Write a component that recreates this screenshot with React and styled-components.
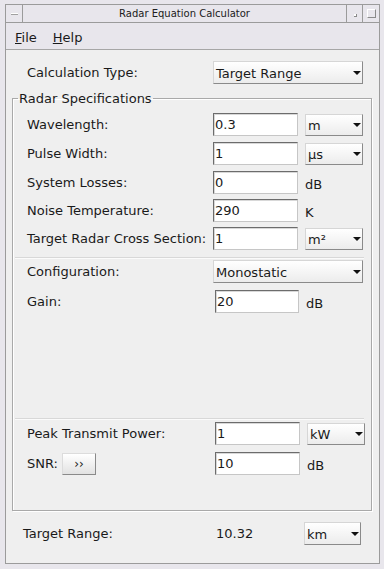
import React from 'react';
import styled, { createGlobalStyle } from 'styled-components';

const Global = createGlobalStyle`
  html, body {
    margin: 0;
    padding: 0;
    background: #e8e6ec;
  }
  * {
    box-sizing: border-box;
  }
`;

const Window = styled.div`
  width: 384px;
  height: 569px;
  padding: 4px 4px 5px 5px;
  background: #e8e6ec;
  font-family: 'DejaVu Sans', 'Liberation Sans', sans-serif;
  font-size: 13px;
  color: #1a1a1a;
`;

const Frame = styled.div`
  height: 100%;
  border: 1px solid #9b9b9b;
  display: flex;
  flex-direction: column;
`;

const TitleBar = styled.div`
  height: 18px;
  display: flex;
  border-bottom: 1px solid #9b9b9b;
  background: #e8e6ec;
`;

const TitleButton = styled.div`
  width: ${(p) => p.$w ?? 17}px;
  flex: none;
  display: flex;
  align-items: center;
  justify-content: center;
  border-left: ${(p) => (p.$left ? '1px solid #9b9b9b' : 'none')};
  border-right: ${(p) => (p.$right ? '1px solid #9b9b9b' : 'none')};
`;

const Dash = styled.div`
  width: 7px;
  height: 2px;
  margin-top: 1px;
  border-top: 1px solid #ffffff;
  border-bottom: 1px solid #a0a0a0;
`;

const Dot = styled.div`
  width: 3px;
  height: 3px;
  margin: 3px 0 0 2px;
  border-right: 1px solid #8a8a8a;
  border-bottom: 1px solid #8a8a8a;
  background: #fff;
`;

const Box = styled.div`
  width: 9px;
  height: 9px;
  border: 1px solid;
  border-color: #ffffff #8a8a8a #8a8a8a #ffffff;
`;

const Title = styled.div`
  flex: 1;
  text-align: center;
  font-size: 10px;
  line-height: 17px;
  color: #202020;
`;

const MenuBar = styled.div`
  height: 27px;
  display: flex;
  align-items: center;
  gap: 16px;
  padding: 2px 0 0 9px;
  border-bottom: 1px solid #a6a6a6;
  background: #e8e6ec;
`;

const MenuItem = styled.span`
  &::first-letter {
    text-decoration: underline;
  }
`;

const Content = styled.div`
  flex: 1;
  display: flex;
  flex-direction: column;
  background: #efefef;
`;

const Row = styled.div`
  display: grid;
  grid-template-columns: ${(p) => p.$label}px ${(p) => p.$field}px ${(p) => p.$unit ?? 58}px;
  column-gap: 7px;
  align-items: center;
  height: ${(p) => p.$h ?? 23}px;
  margin-top: ${(p) => p.$top ?? 0}px;
  padding-left: ${(p) => p.$pad ?? 0}px;
`;

const Label = styled.div`
  white-space: nowrap;
  display: flex;
  align-items: center;
  gap: 4px;
`;

const Input = styled.div`
  height: 23px;
  background: #fff;
  border: 1px solid;
  border-color: #6c6c6c #c6c6c6 #c6c6c6 #6c6c6c;
  box-shadow: inset 1px 1px 0 #d8d8d8;
  padding: 2px 0 0 1px;
  line-height: 17px;
`;

const Select = styled.div`
  height: ${(p) => p.$h ?? 23}px;
  display: flex;
  align-items: center;
  justify-content: space-between;
  padding: 2px 1px 0 2px;
  background: linear-gradient(#ffffff, #ececec);
  border: 1px solid;
  border-color: #d6d6d6 #8a8a8a #8a8a8a #d6d6d6;
`;

const Arrow = styled.span`
  width: 0;
  height: 0;
  border-left: 4px solid transparent;
  border-right: 4px solid transparent;
  border-top: 4px solid #111;
  margin-top: -1px;
`;

const Unit = styled.div`
  padding-top: 4px;
`;

const SmallButton = styled.div`
  width: 34px;
  height: 22px;
  display: flex;
  align-items: center;
  justify-content: center;
  font-size: 12px;
  background: linear-gradient(#ffffff, #e2e2e2);
  border: 1px solid;
  border-color: #dcdcdc #8a8a8a #8a8a8a #dcdcdc;
`;

const Group = styled.fieldset`
  flex: 1;
  display: flex;
  flex-direction: column;
  margin: 7px 7px 0 6px;
  padding: 7px 8px 35px 5px;
  border: 1px solid #a9a9a9;
  box-shadow: inset 1px 1px 0 #ffffff, 1px 1px 0 #ffffff;
  min-width: 0;
`;

const Legend = styled.legend`
  padding: 0 1px;
  line-height: 15px;
`;

const Separator = styled.div`
  height: 2px;
  border-top: 1px solid #d8d8d8;
  border-bottom: 1px solid #fbfbfb;
  margin: ${(p) => p.$top}px -1px 0 -3px;
`;

const Spacer = styled.div`
  flex: ${(p) => (p.$h ? 'none' : 1)};
  height: ${(p) => p.$h ?? 0}px;
`;

const Dropdown = ({ value, h }) => (
  <Select $h={h}>
    <span>{value}</span>
    <Arrow />
  </Select>
);

const specs = [
  { label: 'Wavelength:', value: '0.3', unit: 'm', select: true, top: 0 },
  { label: 'Pulse Width:', value: '1', unit: 'µs', select: true, top: 6 },
  { label: 'System Losses:', value: '0', unit: 'dB', top: 6 },
  { label: 'Noise Temperature:', value: '290', unit: 'K', top: 5 },
  { label: 'Target Radar Cross Section:', value: '1', unit: 'm²', select: true, top: 5 },
];

export default function App() {
  return (
    <Window>
      <Global />
      <Frame>
        <TitleBar>
          <TitleButton $right>
            <Dash />
          </TitleButton>
          <Title>Radar Equation Calculator</Title>
          <TitleButton $left $right>
            <Dot />
          </TitleButton>
          <TitleButton $w={16}>
            <Box />
          </TitleButton>
        </TitleBar>
        <MenuBar>
          <MenuItem>File</MenuItem>
          <MenuItem>Help</MenuItem>
        </MenuBar>
        <Content>
          <Row $label={179} $field={150} $unit={0} $top={11} $pad={21}>
            <Label>Calculation Type:</Label>
            <Dropdown value="Target Range" />
          </Row>
          <Group>
            <Legend>Radar Specifications</Legend>
            {specs.map((s) => (
              <Row key={s.label} $label={179} $field={85} $top={s.top} $pad={9}>
                <Label>{s.label}</Label>
                <Input>{s.value}</Input>
                {s.select ? <Dropdown value={s.unit} h={22} /> : <Unit>{s.unit}</Unit>}
              </Row>
            ))}
            <Separator $top={7} />
            <Row $label={179} $field={150} $unit={0} $top={1} $pad={9}>
              <Label>Configuration:</Label>
              <Dropdown value="Monostatic" />
            </Row>
            <Row $label={181} $field={84} $top={7} $pad={9}>
              <Label>Gain:</Label>
              <Input>20</Input>
              <Unit>dB</Unit>
            </Row>
            <Spacer />
            <Separator $top={0} />
            <Row $label={181} $field={85} $top={2} $pad={9}>
              <Label>Peak Transmit Power:</Label>
              <Input>1</Input>
              <Dropdown value="kW" h={22} />
            </Row>
            <Row $label={181} $field={85} $top={7} $pad={9}>
              <Label>
                SNR:
                <SmallButton>››</SmallButton>
              </Label>
              <Input>10</Input>
              <Unit>dB</Unit>
            </Row>
          </Group>
          <Row $label={186} $field={81} $unit={57} $top={11} $pad={17}>
            <Label>Target Range:</Label>
            <div>10.32</div>
            <Dropdown value="km" />
          </Row>
          <Spacer $h={18} />
        </Content>
      </Frame>
    </Window>
  );
}
